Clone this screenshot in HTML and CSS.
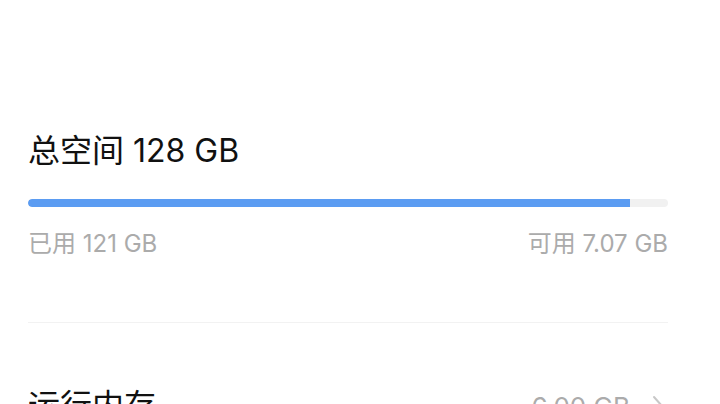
FILE: index.html
```html
<!DOCTYPE html>
<html lang="zh-CN">
<head>
    <meta charset="UTF-8">
    <meta name="viewport" content="width=device-width, initial-scale=1.0">
    <title>存储空间</title>
    <link rel="stylesheet" href="styles.css">
</head>
<body>

    <div class="page">
        <section class="storage">
            <h2 class="storage-title">总空间 128 GB</h2>

            <div class="bar">
                <div class="bar-fill" style="width: 94.1%"></div>
            </div>

            <div class="bar-labels">
                <span>已用 121 GB</span>
                <span>可用 7.07 GB</span>
            </div>
        </section>

        <div class="divider"></div>

        <div class="row">
            <span class="row-label">运行内存</span>
            <span class="row-value">
                6.00 GB
                <svg class="chevron" width="12" height="22" viewBox="0 0 12 22">
                    <path d="M2 2 L10 11 L2 20" fill="none" stroke="#c8c8c8" stroke-width="2" stroke-linecap="round" stroke-linejoin="round"/>
                </svg>
            </span>
        </div>
    </div>

</body>
</html>
```

FILE: styles.css
```css
body {
    margin: 0;
    background-color: #fff;
    font-family: Inter, "Noto Sans CJK SC", sans-serif;
    color: #111;
}
.page {
    padding: 131px 52px 0 28px;
}
.storage-title {
    margin: 0;
    font-size: 32px;
    font-weight: 400;
    line-height: 40px;
}
.bar {
    margin-top: 28px;
    height: 8px;
    border-radius: 4px;
    background-color: #f1f1f1;
    overflow: hidden;
}
.bar-fill {
    height: 100%;
    background-color: #5b9cf2;
    border-radius: 4px 0 0 4px;
}
.bar-labels {
    margin-top: 23px;
    display: flex;
    justify-content: space-between;
    font-size: 24px;
    line-height: 28px;
    color: #ababab;
}
.divider {
    margin-top: 64px;
    height: 1px;
    background-color: #f2f2f2;
}
.row {
    margin-top: 63px;
    display: flex;
    justify-content: space-between;
    align-items: center;
    height: 40px;
}
.row-label {
    font-size: 32px;
    line-height: 40px;
}
.row-value {
    display: flex;
    align-items: center;
    gap: 22px;
    padding-right: 4px;
    font-size: 26px;
    color: #ababab;
}
```
